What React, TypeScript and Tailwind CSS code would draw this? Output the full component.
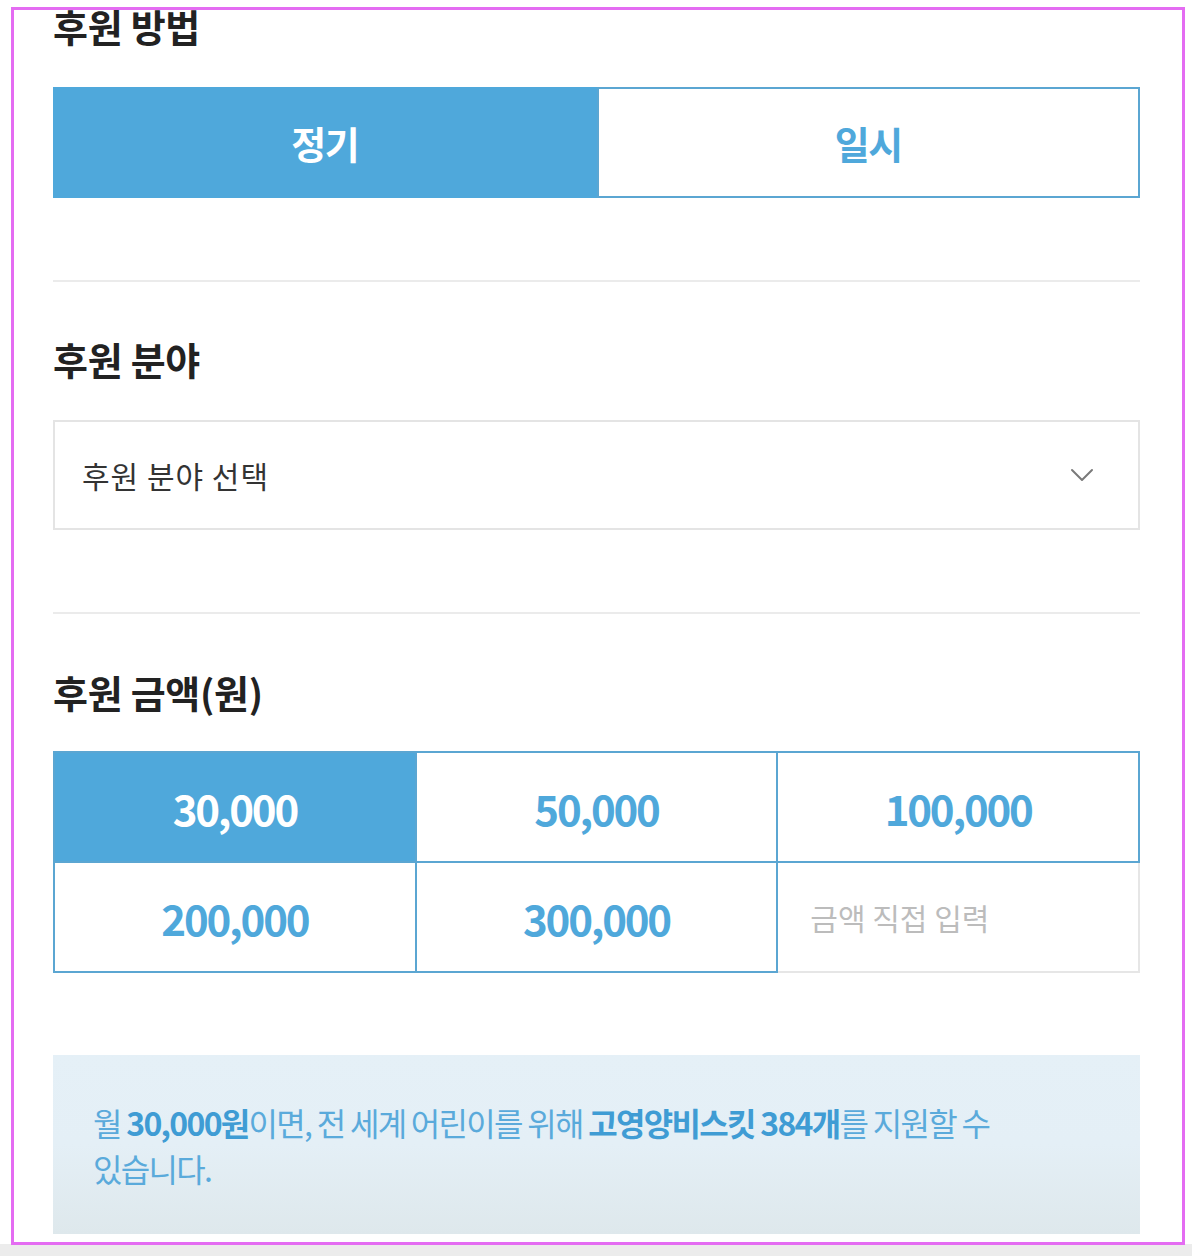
const BLUE = "bg-[#4fa8db]";

function SectionTitle({ children }: { children: React.ReactNode }) {
  return (
    <h2 className="text-[38px] leading-[48px] font-bold tracking-[-0.3px] text-[#222]">
      {children}
    </h2>
  );
}

function Divider() {
  return <div className="h-[2px] bg-[#ebebeb]" />;
}

const amounts = ["30,000", "50,000", "100,000", "200,000", "300,000"];

export default function App() {
  return (
    <div
      className="relative w-[1192px] h-[1256px] bg-white overflow-hidden flex flex-col"
      style={{ fontFamily: '"Noto Sans CJK KR", "Noto Sans", sans-serif' }}
    >
      <div className="flex-1 px-[53px] pr-[52px] pt-[2px]">
        {/* 후원 방법 */}
        <SectionTitle>후원 방법</SectionTitle>
        <div className="mt-[37px] flex h-[111px]">
          <button className={`w-1/2 ${BLUE} text-white text-[38px] font-bold tracking-[-1.5px]`}>
            정기
          </button>
          <button className="w-1/2 border-2 border-[#5ba6d2] bg-white text-[#4fa8db] text-[38px] font-bold tracking-[-1.5px]">
            일시
          </button>
        </div>

        <div className="mt-[82px]">
          <Divider />
        </div>

        {/* 후원 분야 */}
        <div className="mt-[53px]">
          <SectionTitle>후원 분야</SectionTitle>
        </div>
        <div className="mt-[37px] h-[110px] border-2 border-[#e4e4e4] flex items-center justify-between pl-[27px] pr-[44px]">
          <span className="text-[30px] tracking-[1px] text-[#333]">후원 분야 선택</span>
          <svg width="24" height="16" viewBox="0 0 24 16" fill="none">
            <polyline
              points="2,3 12,13 22,3"
              stroke="#7a7a7a"
              strokeWidth="2"
              strokeLinecap="round"
              strokeLinejoin="round"
            />
          </svg>
        </div>

        <div className="mt-[82px]">
          <Divider />
        </div>

        {/* 후원 금액 */}
        <div className="mt-[54px]">
          <SectionTitle>후원 금액(원)</SectionTitle>
        </div>
        <div className="mt-[35px] grid grid-cols-3 border-l-2 border-t-2 border-[#5ba6d2]">
          {amounts.map((a, i) => (
            <button
              key={a}
              className={`h-[110px] border-r-2 border-b-2 border-[#5ba6d2] text-[42px] font-bold tracking-[-2.2px] ${
                i === 0 ? `${BLUE} text-white` : "bg-white text-[#4fa8db]"
              }`}
            >
              {a}
            </button>
          ))}
          <div className="h-[110px] border-r-2 border-b-2 border-[#e6e6e6] flex items-center pl-[32px]">
            <span className="text-[30px] tracking-[0px] text-[#bcbcbc]">금액 직접 입력</span>
          </div>
        </div>

        {/* 안내 */}
        <div className="mt-[82px] h-[179px] bg-gradient-to-b from-[#e5f0f7] via-[#e4eff6] to-[#dee8ec] pl-[40px] pr-[40px] pt-[44px]">
          <p className="text-[32px] leading-[46px] tracking-[-1.7px] text-[#5aaadb] break-keep">
            월 <b className="font-bold text-[#3f9cd4]">30,000원</b>이면, 전 세계 어린이를 위해{" "}
            <b className="font-bold text-[#3f9cd4]">고영양비스킷 384개</b>를 지원할 수 있습니다.
          </p>
        </div>
      </div>

      <div className="h-[12px] bg-[#ececec]" />

      {/* screenshot frame */}
      <div className="pointer-events-none absolute left-[11px] top-[7px] w-[1174px] h-[1238px] border-[3px] border-[#e46cf2]" />
    </div>
  );
}
